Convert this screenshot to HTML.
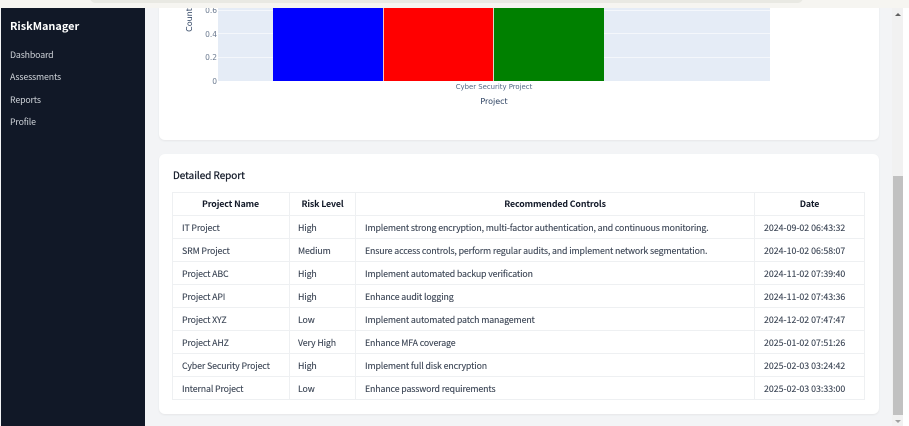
<!DOCTYPE html>
<html>
<head>
<meta charset="utf-8">
<style>
html,body{margin:0;padding:0;width:909px;height:426px;overflow:hidden;background:#fff}
body{font-family:"Noto Sans CJK JP","Liberation Sans",sans-serif;position:relative}
div,span{position:absolute;white-space:nowrap}
#root{left:0;top:0;width:909px;height:426px;overflow:hidden;filter:blur(.25px)}
.nav{left:10px;font-size:8.8px;letter-spacing:-.15px;color:#d1d5db;line-height:12px}
.tick{font-family:"DejaVu Sans",sans-serif;font-size:7.5px;color:#6b7a90;line-height:10px;width:30px;text-align:right;left:187px}
.grid{left:218px;width:552px;height:1px;background:#f4f7fb}
.h{position:absolute;height:1px;left:172px;width:693px;background:#eef0f2}
.v{position:absolute;width:1px;top:192px;height:208px;background:#eef0f2}
.c{font-size:8.8px;letter-spacing:-.13px;color:#374151;line-height:12px;-webkit-text-stroke:.1px #374151}
.d{letter-spacing:0}
.th{font-size:8.8px;letter-spacing:-.12px;font-weight:bold;color:#111827;line-height:12px;text-align:center}
</style>
</head>
<body>
<div id="root">
  <div style="left:0;top:8px;width:892px;height:418px;background:#f3f4f6"></div>
  <div style="left:892px;top:8px;width:11px;height:418px;background:#f1f1f1"></div>
  <div style="left:893px;top:176px;width:10px;height:239px;background:#c1c1c1"></div>
  <div style="left:895px;top:13px;width:0;height:0;border-left:3px solid transparent;border-right:3px solid transparent;border-bottom:3px solid #606060"></div>
  <div style="left:895px;top:420px;width:0;height:0;border-left:3px solid transparent;border-right:3px solid transparent;border-top:3px solid #a0a0a0"></div>

  <div style="left:159px;top:-20px;width:720px;height:160px;background:#fff;border-radius:6px;box-shadow:0 1px 2px rgba(0,0,0,.06)"></div>
  <div style="left:218px;top:8px;width:552px;height:73px;background:#e5ecf6"></div>
  <div class="grid" style="top:10px"></div>
  <div class="grid" style="top:33px"></div>
  <div class="grid" style="top:57px"></div>
  <div style="left:273px;top:8px;width:110px;height:73px;background:#0000ff"></div>
  <div style="left:383px;top:8px;width:110px;height:73px;background:#ff0000;border-left:1px solid #f3c0c0;box-sizing:border-box"></div>
  <div style="left:493px;top:8px;width:111px;height:73px;background:#008000;border-left:1px solid #d8d8c8;box-sizing:border-box"></div>
  <div class="tick" style="top:6px">0.6</div>
  <div class="tick" style="top:30px">0.4</div>
  <div class="tick" style="top:53px">0.2</div>
  <div class="tick" style="top:77px">0</div>
  <div style="left:170px;top:15px;width:40px;text-align:center;font-family:'DejaVu Sans',sans-serif;font-size:8px;line-height:10px;color:#2a3f5f;transform:rotate(-90deg)">Count</div>
  <div style="left:414px;top:81.5px;width:160px;text-align:center;font-family:'DejaVu Sans',sans-serif;font-size:6.9px;line-height:10px;color:#506784">Cyber Security Project</div>
  <div style="left:444px;top:96px;width:100px;text-align:center;font-family:'DejaVu Sans',sans-serif;font-size:8px;line-height:12px;color:#2a3f5f">Project</div>

  <div style="left:0;top:0;width:909px;height:8px;background:#f6f5f1"></div>
  <div style="left:90px;top:-8px;width:713px;height:11px;background:#e9e9e3;border-radius:6px"></div>

  <div style="left:1px;top:8px;width:144px;height:418px;background:#111827"></div>
  <div style="left:10px;top:19px;font-size:10.9px;font-weight:bold;color:#fff;line-height:14px">RiskManager</div>
  <div class="nav" style="top:49px">Dashboard</div>
  <div class="nav" style="top:71px">Assessments</div>
  <div class="nav" style="top:94px">Reports</div>
  <div class="nav" style="top:116px">Profile</div>

  <div style="left:159px;top:154px;width:720px;height:260px;background:#fff;border-radius:6px;box-shadow:0 1px 2px rgba(0,0,0,.06)"></div>
  <div style="left:173px;top:168px;font-size:9.9px;color:#111827;line-height:14px;-webkit-text-stroke:.25px #111827">Detailed Report</div>

  <div class="h" style="top:192px"></div><div class="h" style="top:215px"></div><div class="h" style="top:238px"></div>
  <div class="h" style="top:261px"></div><div class="h" style="top:284px"></div><div class="h" style="top:307px"></div>
  <div class="h" style="top:330px"></div><div class="h" style="top:353px"></div><div class="h" style="top:376px"></div>
  <div class="h" style="top:399px"></div>
  <div class="v" style="left:172px"></div><div class="v" style="left:289px"></div><div class="v" style="left:355px"></div>
  <div class="v" style="left:754px"></div><div class="v" style="left:864px"></div>

  <div class="th" style="left:172px;width:117px;top:198px">Project Name</div>
  <div class="th" style="left:289px;width:67px;top:198px">Risk Level</div>
  <div class="th" style="left:355px;width:400px;top:198px">Recommended Controls</div>
  <div class="th" style="left:754px;width:111px;top:198px">Date</div>

  <div class="c" style="left:182px;top:222px">IT Project</div><div class="c" style="left:298px;top:222px">High</div><div class="c" style="left:365px;top:222px">Implement strong encryption, multi-factor authentication, and continuous monitoring.</div><div class="c d" style="left:764px;top:222px">2024-09-02 06:43:32</div>
  <div class="c" style="left:182px;top:245px">SRM Project</div><div class="c" style="left:298px;top:245px">Medium</div><div class="c" style="left:365px;top:245px">Ensure access controls, perform regular audits, and implement network segmentation.</div><div class="c d" style="left:764px;top:245px">2024-10-02 06:58:07</div>
  <div class="c" style="left:182px;top:268px">Project ABC</div><div class="c" style="left:298px;top:268px">High</div><div class="c" style="left:365px;top:268px">Implement automated backup verification</div><div class="c d" style="left:764px;top:268px">2024-11-02 07:39:40</div>
  <div class="c" style="left:182px;top:291px">Project API</div><div class="c" style="left:298px;top:291px">High</div><div class="c" style="left:365px;top:291px">Enhance audit logging</div><div class="c d" style="left:764px;top:291px">2024-11-02 07:43:36</div>
  <div class="c" style="left:182px;top:314px">Project XYZ</div><div class="c" style="left:298px;top:314px">Low</div><div class="c" style="left:365px;top:314px">Implement automated patch management</div><div class="c d" style="left:764px;top:314px">2024-12-02 07:47:47</div>
  <div class="c" style="left:182px;top:337px">Project AHZ</div><div class="c" style="left:298px;top:337px">Very High</div><div class="c" style="left:365px;top:337px">Enhance MFA coverage</div><div class="c d" style="left:764px;top:337px">2025-01-02 07:51:26</div>
  <div class="c" style="left:182px;top:360px">Cyber Security Project</div><div class="c" style="left:298px;top:360px">High</div><div class="c" style="left:365px;top:360px">Implement full disk encryption</div><div class="c d" style="left:764px;top:360px">2025-02-03 03:24:42</div>
  <div class="c" style="left:182px;top:383px">Internal Project</div><div class="c" style="left:298px;top:383px">Low</div><div class="c" style="left:365px;top:383px">Enhance password requirements</div><div class="c d" style="left:764px;top:383px">2025-02-03 03:33:00</div>
</div>
</body>
</html>
